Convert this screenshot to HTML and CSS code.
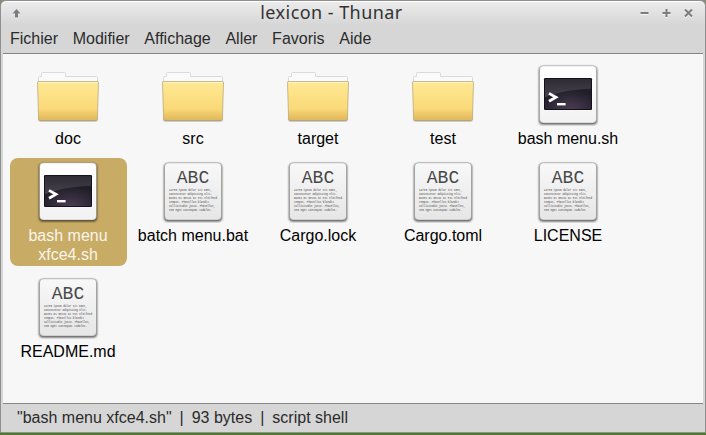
FILE: index.html
```
<!DOCTYPE html>
<html lang="fr">
<head>
<meta charset="utf-8">
<title>lexicon - Thunar</title>
<link rel="stylesheet" href="styles.css">
</head>
<body>
<svg class="defs" width="0" height="0" aria-hidden="true">
  <defs>
    <linearGradient id="gold" x1="0" y1="0" x2="0" y2="1">
      <stop offset="0" stop-color="#ffe994"/><stop offset=".7" stop-color="#fad978"/><stop offset=".85" stop-color="#ecc667"/><stop offset="1" stop-color="#dfb75b"/>
    </linearGradient>
    <linearGradient id="card" x1="0" y1="0" x2="0" y2="1">
      <stop offset="0" stop-color="#f8f8f8"/><stop offset="1" stop-color="#e6e6e6"/>
    </linearGradient>
    <linearGradient id="white" x1="0" y1="0" x2="0" y2="1">
      <stop offset="0" stop-color="#ffffff"/><stop offset="1" stop-color="#f2f2f2"/>
    </linearGradient>
    <radialGradient id="term" cx=".55" cy="1" r=".65">
      <stop offset="0" stop-color="#4b3d55"/><stop offset="1" stop-color="#211e28"/>
    </radialGradient>
    <linearGradient id="gloss" x1="0" y1="0" x2="0" y2="1">
      <stop offset="0" stop-color="#fff" stop-opacity=".06"/><stop offset="1" stop-color="#fff" stop-opacity=".16"/>
    </linearGradient>
    <filter id="soft" x="-10%" y="-10%" width="120%" height="120%"><feGaussianBlur stdDeviation=".8"/></filter>
  </defs>
  <symbol id="folder" viewBox="0 0 64 64">
    <rect x="3" y="56" width="58" height="3.6" rx="1" fill="#000" opacity=".35" filter="url(#soft)"/>
    <path d="M2.500 22V15.500Q2.500 14.500 3.500 14.500H5.500V11.500Q5.500 10.500 6.500 10.500H28.500Q29.500 10.500 29.500 11.500V14.500H60.500Q61.500 14.500 61.500 15.500V22Z" fill="#fafafa" stroke="#dadada"/>
    <path d="M2.300 19.500H61.700Q62.600 19.500 62.500 20.500L61.400 57.500Q61.300 58.500 60.300 58.500H3.700Q2.700 58.500 2.600 57.500L1.500 20.500Q1.400 19.500 2.300 19.500Z" fill="url(#gold)" stroke="#a89c78" stroke-opacity=".65"/>
    <path d="M2.500 20.500H61.500" stroke="#fff3bd" fill="none"/>
  </symbol>
  <symbol id="script" viewBox="0 0 64 64">
    <rect x="3" y="4.500" width="58" height="58" rx="4" fill="#000" opacity=".65" filter="url(#soft)"/>
    <rect x="3.500" y="3.800" width="57" height="57.200" rx="4" fill="url(#white)" stroke="#777" stroke-opacity=".45" stroke-width=".8"/>
    <rect x="8" y="16" width="48" height="32" rx="1.200" fill="url(#term)"/>
    <path d="M8.500 16.500H55.500V26.800C40 27 22 30 8.500 35.500Z" fill="url(#gloss)"/>
    <rect x="8.500" y="16.500" width="47" height="31" rx="1" fill="none" stroke="#15121b"/>
    <path d="M13 31.300L20 35.300L13 39.200" fill="none" stroke="#fff" stroke-width="2.700"/>
    <rect x="21" y="41" width="8.600" height="2.400" fill="#fff"/>
  </symbol>
  <symbol id="doc" viewBox="0 0 64 64">
    <rect x="3" y="4.500" width="58" height="58" rx="4" fill="#000" opacity=".65" filter="url(#soft)"/>
    <rect x="3.500" y="3.800" width="57" height="57.200" rx="4" fill="url(#card)" stroke="#777" stroke-opacity=".5" stroke-width=".8"/>
    <text class="abc" x="32" y="24">ABC</text>
    <g class="lorem">
      <text x="8" y="32" textLength="43">Lorem ipsum dolor sit amet,</text>
      <text x="8" y="36" textLength="43">consectetur adipiscing elit.</text>
      <text x="8" y="40" textLength="48">Donec at metus at est eleifend</text>
      <text x="8" y="44" textLength="40">tempus. Phasellus blandit</text>
      <text x="8" y="48" textLength="46">sollicitudin justo. Phasellus,</text>
      <text x="8" y="52" textLength="43">sem eget consequat sodales.</text>
    </g>
  </symbol>
</svg>
<div class="window">
  <header class="titlebar">
    <svg class="shade" viewBox="0 0 9 9"><path d="M4.500 0L8.500 4.500H6V8.500H3V4.500H.5Z"/></svg>
    <h1>lexicon - Thunar</h1>
    <div class="controls">
      <svg viewBox="0 0 9 9"><path d="M.5 3H8.500V5H.5Z"/></svg>
      <svg viewBox="0 0 9 9"><path d="M3.500 0H5.500V3H8.500V5H5.500V8H3.500V5H.5V3H3.500Z"/></svg>
      <svg viewBox="0 0 9 9"><path d="M1 .5L8 7.500M8 .5L1 7.500" class="cross"/></svg>
    </div>
  </header>
  <nav class="menubar"><span>Fichier</span><span>Modifier</span><span>Affichage</span><span>Aller</span><span>Favoris</span><span>Aide</span></nav>
  <main class="files">
    <div class="item"><svg><use href="#folder"/></svg><span>doc</span></div>
    <div class="item"><svg><use href="#folder"/></svg><span>src</span></div>
    <div class="item"><svg><use href="#folder"/></svg><span>target</span></div>
    <div class="item"><svg><use href="#folder"/></svg><span>test</span></div>
    <div class="item"><svg><use href="#script"/></svg><span>bash menu.sh</span></div>
    <div class="item selected"><svg><use href="#script"/></svg><span>bash menu xfce4.sh</span></div>
    <div class="item"><svg><use href="#doc"/></svg><span>batch menu.bat</span></div>
    <div class="item"><svg><use href="#doc"/></svg><span>Cargo.lock</span></div>
    <div class="item"><svg><use href="#doc"/></svg><span>Cargo.toml</span></div>
    <div class="item"><svg><use href="#doc"/></svg><span>LICENSE</span></div>
    <div class="item"><svg><use href="#doc"/></svg><span>README.md</span></div>
  </main>
  <footer class="status"><span>"bash menu xfce4.sh"</span><span>|</span><span>93 bytes</span><span>|</span><span>script shell</span></footer>
</div>
</body>
</html>
```
FILE: styles.css
```
* { box-sizing: border-box; }
body {
  margin: 0;
  height: 435px;
  overflow: hidden;
  background: linear-gradient(#8b8b7d 0 380px, #4f7a2c 433px);
  font: 16px/19px "Liberation Sans", Arial, sans-serif;
  color: #2b2b2b;
}
.defs { position: absolute; }
.window {
  height: 433px;
  display: flex;
  flex-direction: column;
  border: 1px solid #8f8f8f;
  border-radius: 6px 6px 0 0;
  background: linear-gradient(#ececec, #d6d6d6 24px);
  box-shadow: inset 0 1px #fff;
}
.titlebar {
  height: 24px;
  display: grid;
  grid-template-columns: 100px 1fr 100px;
  align-items: center;
  padding: 0 11px;
  fill: #7c7c7c;
}
.titlebar svg { width: 9px; height: 9px; filter: drop-shadow(0 1px 0 #f6f6f6); }
.shade { margin-top: 1px; }
.titlebar h1 {
  margin: -3px 0 0;
  padding-right: 43px;
  text-align: center;
  font: 18px/24px "Noto Sans", sans-serif;
  letter-spacing: .45px;
  white-space: nowrap;
  color: #333;
}
.controls { display: flex; gap: 13px; justify-content: flex-end; padding: 1px 1px 0 0; }
.cross { stroke: #7c7c7c; stroke-width: 2; }
.menubar {
  height: 28px;
  display: flex;
  gap: 14.7px;
  padding: 4px 9px 0;
}
.files {
  height: 351px;
  margin: 0 2px;
  padding: 7px 7px 0;
  display: grid;
  grid-template-columns: repeat(5, 117px);
  grid-template-rows: 89px 108px 89px;
  gap: 8px;
  background: #f7f7f7;
  border-top: 1px solid #858585;
  border-bottom: 1px solid #858585;
  color: #000;
}
.item {
  display: flex;
  flex-direction: column;
  align-items: center;
  padding: 1px 1px 0 0;
  border-radius: 8px;
  text-align: center;
}
.item svg { width: 64px; height: 64px; flex: none; margin-bottom: 3px; }
.selected { background: #c8ab65; color: #f8f5ec; }
.abc { font: 18px "Liberation Mono", monospace; text-anchor: middle; fill: #484848; }
.lorem { font: bold 2.6px "Liberation Mono", monospace; fill: #777; }
.status { display: flex; gap: 8px; padding: 4px 16px 0; }
```
